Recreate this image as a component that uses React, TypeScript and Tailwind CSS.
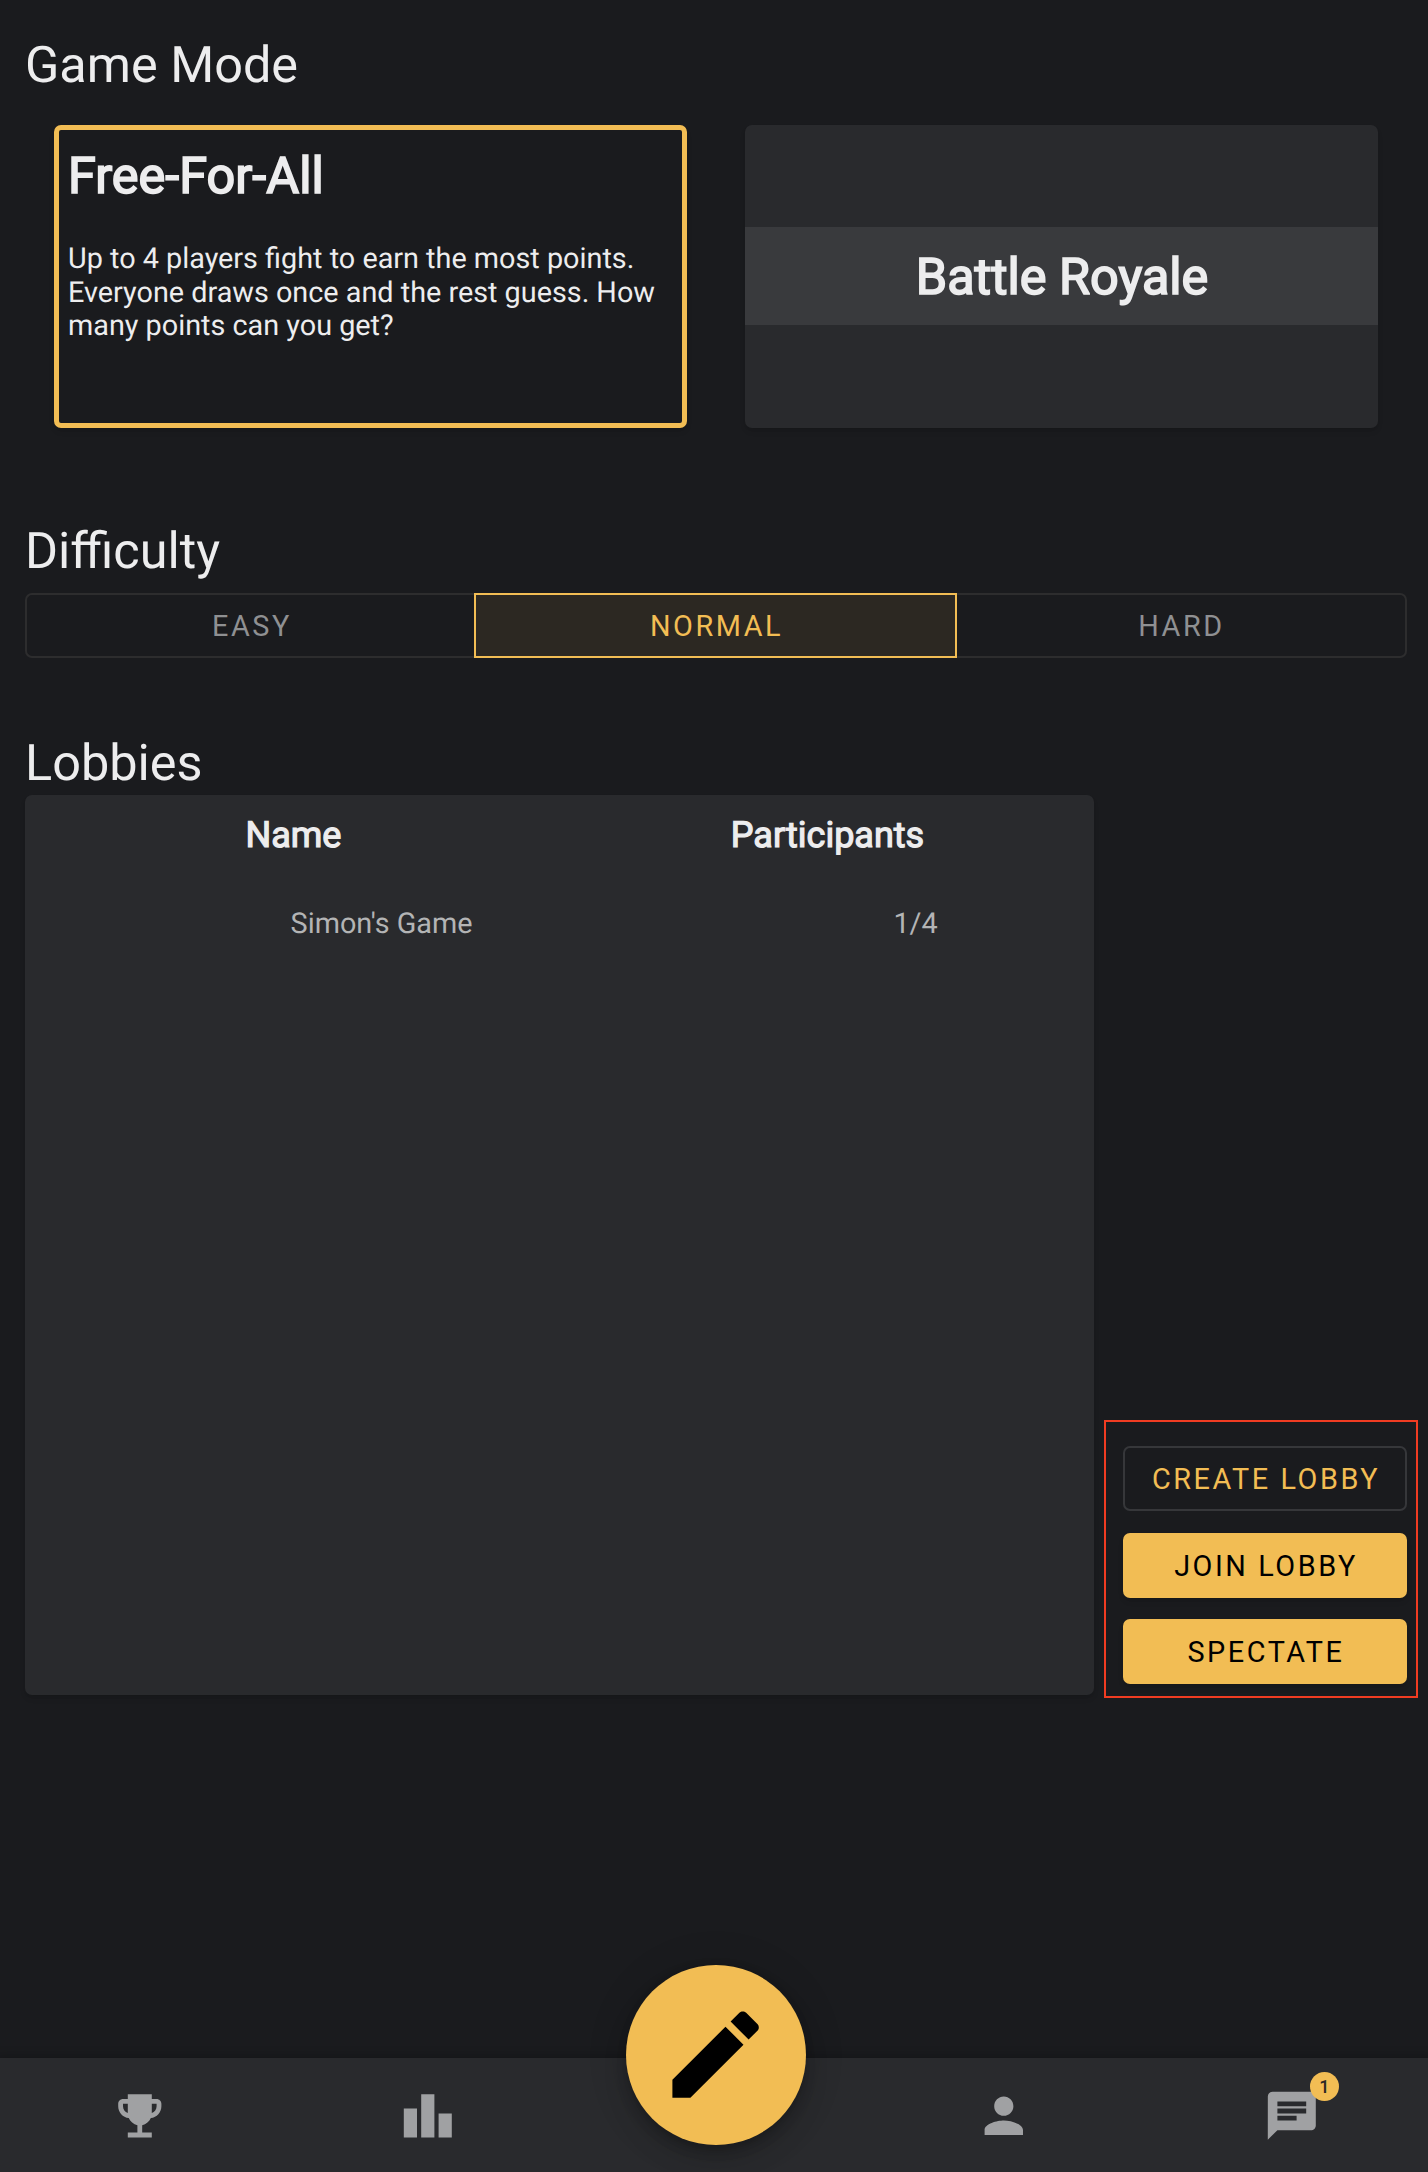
import React from "react";

function Icon({ d, className }: { d: string; className: string }) {
  return (
    <svg viewBox="0 0 24 24" fill="currentColor" className={className} aria-hidden="true">
      <path d={d} />
    </svg>
  );
}

const ICONS = {
  trophy:
    "M19 5h-2V3H7v2H5c-1.1 0-2 .9-2 2v1c0 2.55 1.92 4.63 4.39 4.94.63 1.5 1.98 2.63 3.61 2.96V19H7v2h10v-2h-4v-3.1c1.63-.33 2.98-1.46 3.61-2.96C19.08 12.63 21 10.55 21 8V7c0-1.1-.9-2-2-2zM5 8V7h2v3.82C5.84 10.4 5 9.3 5 8zm14 0c0 1.3-.84 2.4-2 2.82V7h2v1z",
  leaderboard: "M7.5 21H2V9h5.5v12zm7.25-18h-5.5v18h5.5V3zM22 11h-5.5v10H22V11z",
  pencil:
    "M3 17.25V21h3.75L17.81 9.94l-3.75-3.75L3 17.25zM20.71 7.04c.39-.39.39-1.02 0-1.41l-2.34-2.34c-.39-.39-1.02-.39-1.41 0l-1.83 1.83 3.75 3.75 1.83-1.83z",
  person:
    "M12 12c2.21 0 4-1.79 4-4s-1.79-4-4-4-4 1.79-4 4 1.79 4 4 4zm0 2c-2.67 0-8 1.34-8 4v2h16v-2c0-2.66-5.33-4-8-4z",
  chat:
    "M20 2H4c-1.1 0-1.99.9-1.99 2L2 22l4-4h14c1.1 0 2-.9 2-2V4c0-1.1-.9-2-2-2zM6 9h12v2H6V9zm8 5H6v-2h8v2zm4-6H6V6h12v2z",
};

function Heading({ children }: { children: React.ReactNode }) {
  return <h2 className="text-[50.4px] leading-[60px] font-normal">{children}</h2>;
}

const BUTTON =
  "flex h-[65px] w-full items-center justify-center rounded-[7px] pt-[3px] pl-[2px] text-[28.8px] tracking-[2.57px]";

function NavItem({ children }: { children: React.ReactNode }) {
  return <button className="flex w-72 shrink-0 items-center justify-center pt-[2px]">{children}</button>;
}

export default function App() {
  return (
    <div className="flex h-[2172px] w-[1428px] flex-col overflow-hidden bg-[#1a1b1e] font-['Roboto',sans-serif] text-[#ededee] [text-rendering:geometricPrecision]">
      <main className="flex-1 pr-[21px] pl-[25px]">
        <section className="pt-[36px]">
          <Heading>Game Mode</Heading>
          <div className="mt-[29px] flex gap-[58px] pl-[29px]">
            <div className="h-[303px] w-[633px] rounded-[7px] border-[5px] border-[#f2bd54] px-[9px] pt-[17px] shadow-md">
              <h3 className="text-[50.4px] leading-[60px] font-normal [-webkit-text-stroke:1.7px_#ededee]">
                Free-For-All
              </h3>
              <p className="mt-[36px] text-[28.8px] leading-[33.6px]">
                Up to 4 players fight to earn the most points. Everyone draws once and the rest guess. How many
                points can you get?
              </p>
            </div>
            <div className="h-[303px] w-[633px] rounded-[7px] bg-[#292a2d] pt-[102px] shadow-md">
              <h3 className="h-[98px] w-full bg-[#393a3d] pl-[1px] text-center text-[50.4px] leading-[102px] font-normal [-webkit-text-stroke:1.7px_#ededee]">
                Battle Royale
              </h3>
            </div>
          </div>
        </section>

        <section className="pt-[94px]">
          <Heading>Difficulty</Heading>
          <div className="mt-[11px] flex h-[65px] text-[28.8px] tracking-[2.57px] text-[#8f9092]">
            <button className="w-[449px] rounded-l-[7px] border-2 border-r-0 border-[#2d2d2e] pt-[3px] pl-[3px]">
              EASY
            </button>
            <button className="w-[483px] border-2 border-[#f2bd54] bg-[#2c2822] pt-[3px] pl-[2px] text-[#f2bd54]">
              NORMAL
            </button>
            <button className="w-[450px] rounded-r-[7px] border-2 border-l-0 border-[#2d2d2e] pt-[3px] pl-[1px]">
              HARD
            </button>
          </div>
        </section>

        <section className="pt-[76px]">
          <Heading>Lobbies</Heading>
          <div className="mt-[1px] flex items-end gap-[10px]">
            <div className="h-[900px] w-[1069px] rounded-[7px] bg-[#292a2d] shadow-md">
              <div className="flex pt-[19px] text-[36px] leading-[42px] [-webkit-text-stroke:1.2px_#ededee]">
                <div className="w-[537px] text-center">Name</div>
                <div className="w-[531px] text-center">Participants</div>
              </div>
              <div className="mt-[51px] flex text-[28.8px] leading-[34px] text-[#b3b4b5]">
                <div className="w-[713px] text-center">Simon's Game</div>
                <div className="w-[355px] text-center">1/4</div>
              </div>
            </div>
            <div className="-mr-[11px] -mb-[3px] flex h-[278px] w-[314px] shrink-0 flex-col gap-[21.5px] border-2 border-[#f03c22] pt-[24px] pr-[9px] pl-[17px]">
              <button className={`${BUTTON} border-2 border-[#36373a] text-[#f2bd54]`}>CREATE LOBBY</button>
              <button className={`${BUTTON} bg-[#f2bd54] text-black shadow-md`}>JOIN LOBBY</button>
              <button className={`${BUTTON} bg-[#f2bd54] text-black shadow-md`}>SPECTATE</button>
            </div>
          </div>
        </section>
      </main>

      <nav className="-ml-1 flex h-[114px] w-[1440px] bg-[#292a2d] text-[#a0a1a3] shadow-[0_-2px_10px_rgba(0,0,0,0.2)]">
        <NavItem>
          <Icon d={ICONS.trophy} className="size-[57.6px]" />
        </NavItem>
        <NavItem>
          <Icon d={ICONS.leaderboard} className="size-[57.6px]" />
        </NavItem>
        <NavItem>
          <span className="-mt-[123px] flex size-[180px] items-center justify-center rounded-full bg-[#f2bd54] text-black shadow-[0_7px_12px_-2px_rgba(0,0,0,0.2),0_14px_24px_rgba(0,0,0,0.14),0_2px_43px_rgba(0,0,0,0.12)]">
            <Icon d={ICONS.pencil} className="size-[115.2px]" />
          </span>
        </NavItem>
        <NavItem>
          <Icon d={ICONS.person} className="size-[57.6px]" />
        </NavItem>
        <NavItem>
          <span className="relative">
            <Icon d={ICONS.chat} className="size-[57.6px]" />
            <span className="absolute -top-[15px] -right-[18px] flex size-[29px] items-center justify-center rounded-full bg-[#f2bd54] text-[18px] font-medium text-[#2b2926]">
              1
            </span>
          </span>
        </NavItem>
      </nav>
    </div>
  );
}
